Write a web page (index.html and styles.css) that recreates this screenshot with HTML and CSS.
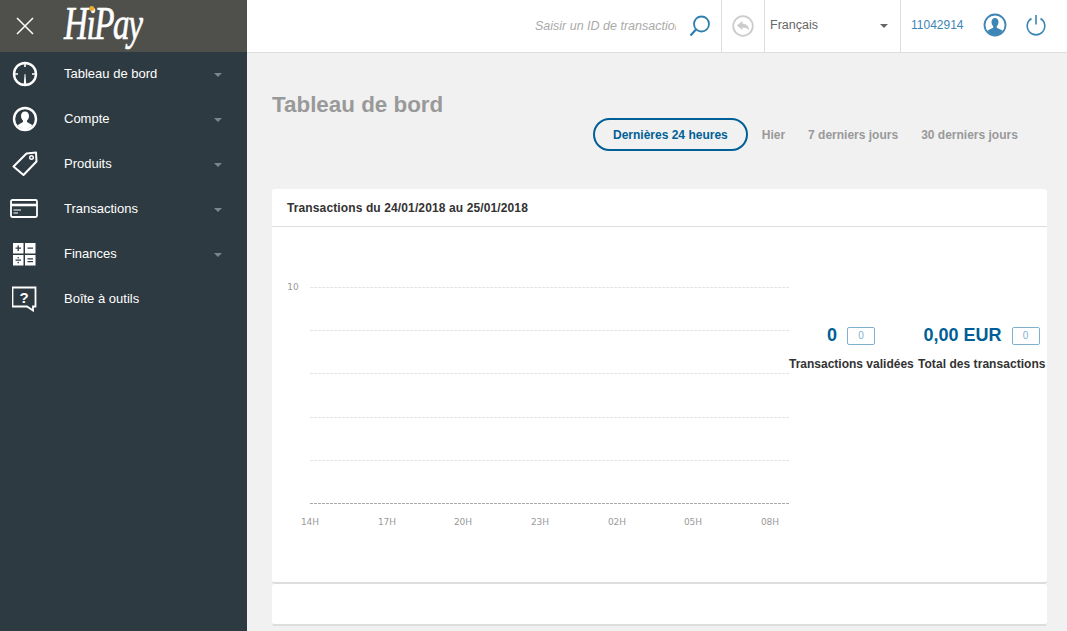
FILE: index.html
```html
<!DOCTYPE html>
<html lang="fr">
<head>
    <meta charset="UTF-8">
    <title>Tableau de bord</title>
    <link rel="stylesheet" href="styles.css">
</head>
<body>

    <aside class="sidebar">
        <div class="brand">
            <svg class="close-icon" width="18" height="18" viewBox="0 0 18 18"><path d="M1 1L17 17M17 1L1 17" stroke="#fff" stroke-width="1.5" fill="none"/></svg>
            <span class="logo">HiPay<i class="logo-dot"></i></span>
        </div>
        <ul class="menu">
            <li class="menu-item">
                <span class="menu-icon">
                    <svg width="28" height="28" viewBox="0 0 28 28"><circle cx="14" cy="14" r="11" stroke="#fff" stroke-width="2.4" fill="none"/><path d="M14 3V7M3 14H7M25 14H21" stroke="#fff" stroke-width="1.6"/><path d="M12.8 24L13.6 14H14.4L15.2 24Z" fill="#fff"/></svg>
                </span>
                <span class="menu-label">Tableau de bord</span>
                <i class="caret"></i>
            </li>
            <li class="menu-item">
                <span class="menu-icon">
                    <svg width="28" height="28" viewBox="0 0 28 28"><circle cx="14" cy="14" r="11" stroke="#fff" stroke-width="2.4" fill="none"/><path d="M14 6.5C11.4 6.5 10 8.6 10 11C10 13 11 14.6 12 15.6V17L6.8 20L8 22L14 25L20 22L21.2 20L16 17V15.6C17 14.6 18 13 18 11C18 8.6 16.6 6.5 14 6.5Z" fill="#fff"/></svg>
                </span>
                <span class="menu-label">Compte</span>
                <i class="caret"></i>
            </li>
            <li class="menu-item">
                <span class="menu-icon">
                    <svg width="28" height="28" viewBox="0 0 28 28"><path d="M2.5 16.5L15.5 3.5L25 2.5L25.5 11.5L12.5 25Z" stroke="#fff" stroke-width="2" stroke-linejoin="round" fill="none"/><circle cx="20.5" cy="7.5" r="1.8" stroke="#fff" stroke-width="1.4" fill="none"/></svg>
                </span>
                <span class="menu-label">Produits</span>
                <i class="caret"></i>
            </li>
            <li class="menu-item">
                <span class="menu-icon">
                    <svg width="30" height="19" viewBox="0 0 30 19"><rect x="1" y="1" width="26" height="17" rx="1.5" stroke="#fff" stroke-width="1.8" fill="none"/><path d="M1 6H27" stroke="#fff" stroke-width="2.6"/><path d="M3.500 11H11M3.500 14H8" stroke="#fff" stroke-width="1"/></svg>
                </span>
                <span class="menu-label">Transactions</span>
                <i class="caret"></i>
            </li>
            <li class="menu-item">
                <span class="menu-icon">
                    <svg width="24" height="24" viewBox="1 0 24 24"><rect x="1" y="1" width="10.500" height="10.500" fill="#fff"/><rect x="13" y="1" width="10.500" height="10.500" fill="#fff"/><rect x="1" y="13" width="10.500" height="10.500" fill="#fff"/><rect x="13" y="13" width="10.500" height="10.500" fill="#fff"/><path d="M3.500 6.200H9M6.200 3.500V9M15.500 6.200H21M3.500 18.200H9M15.500 16.800H21M15.500 19.600H21" stroke="#2e3a41" stroke-width="1.3"/><circle cx="6.200" cy="15.800" r=".8" fill="#2e3a41"/><circle cx="6.200" cy="20.600" r=".8" fill="#2e3a41"/></svg>
                </span>
                <span class="menu-label">Finances</span>
                <i class="caret"></i>
            </li>
            <li class="menu-item">
                <span class="menu-icon">
                    <svg width="26" height="26" viewBox="1 0 26 26"><path d="M1.500 1.500H24.500V20.500H22V24.500L16 20.500H1.500Z" stroke="#fff" stroke-width="1.800" fill="none"/><text x="13" y="16.500" class="help-mark">?</text></svg>
                </span>
                <span class="menu-label">Boîte à outils</span>
            </li>
        </ul>
    </aside>

    <div class="main">
        <header class="topbar">
            <div class="search">
                <input class="search-input" type="text" placeholder="Saisir un ID de transaction">
                <svg width="22" height="22" viewBox="0 0 22 22"><circle cx="12.500" cy="9" r="7.500" stroke="#2e7fb0" stroke-width="1.800" fill="none"/><path d="M7 14.500L1.500 20.500" stroke="#2e7fb0" stroke-width="2.200"/></svg>
            </div>
            <div class="back">
                <svg width="22" height="22" viewBox="0 0 22 22"><circle cx="11" cy="11" r="9.800" stroke="#ccc" stroke-width="1.800" fill="none"/><path d="M4.800 10.500L10.500 6V8.800C14.500 8.800 17 11 17 15.500C15.500 13.300 13.500 12.500 10.500 12.500V15Z" fill="#ccc"/></svg>
            </div>
            <div class="lang">
                <span>Français</span>
                <i class="caret caret-dark"></i>
            </div>
            <div class="account">
                <span class="account-id">11042914</span>
                <svg class="user-icon" width="24" height="24" viewBox="0 0 24 24"><circle cx="12" cy="12" r="10.500" stroke="#3d85b5" stroke-width="1.800" fill="none"/><path d="M12 5C9.800 5 8.500 6.800 8.500 9C8.500 11 9.400 12.400 10.200 13.300V14.800L4.500 17.500C6 20.500 9 22 12 22C15 22 18 20.500 19.500 17.500L13.800 14.800V13.300C14.600 12.400 15.500 11 15.500 9C15.500 6.800 14.200 5 12 5Z" fill="#3d85b5"/></svg>
                <svg class="power-icon" width="20" height="22" viewBox="0 0 20 22"><path d="M5.500 4.500A8.800 8.800 0 1 0 14.500 4.500" stroke="#3d85b5" stroke-width="1.600" fill="none"/><path d="M10 1V10.500" stroke="#3d85b5" stroke-width="1.600"/></svg>
            </div>
        </header>

        <main class="content">
            <h1 class="page-title">Tableau de bord</h1>
            <nav class="periods">
                <a class="period period-active">Dernières 24 heures</a>
                <a class="period">Hier</a>
                <a class="period">7 derniers jours</a>
                <a class="period">30 derniers jours</a>
            </nav>

            <section class="card">
                <h2 class="card-title">Transactions du 24/01/2018 au 25/01/2018</h2>
                <div class="card-body">
                    <svg class="chart" width="517" height="355" viewBox="272 227 517 355">
                        <text class="tick" x="293" y="290" text-anchor="middle">10</text>
                        <path class="grid" d="M310 287.500H789M310 330.500H789M310 373.500H789M310 417.500H789M310 460.500H789"/>
                        <path class="grid grid-base" d="M310 503.500H789"/>
                        <text class="tick" x="310" y="525" text-anchor="middle">14H</text>
                        <text class="tick" x="387" y="525" text-anchor="middle">17H</text>
                        <text class="tick" x="463" y="525" text-anchor="middle">20H</text>
                        <text class="tick" x="540" y="525" text-anchor="middle">23H</text>
                        <text class="tick" x="617" y="525" text-anchor="middle">02H</text>
                        <text class="tick" x="693" y="525" text-anchor="middle">05H</text>
                        <text class="tick" x="770" y="525" text-anchor="middle">08H</text>
                    </svg>
                    <div class="stats">
                        <div class="stat">
                            <div class="stat-value"><strong>0</strong><span class="badge">0</span></div>
                            <div class="stat-label">Transactions validées</div>
                        </div>
                        <div class="stat stat-total">
                            <div class="stat-value"><strong>0,00 EUR</strong><span class="badge">0</span></div>
                            <div class="stat-label">Total des transactions</div>
                        </div>
                    </div>
                </div>
            </section>
            <section class="card card-empty"></section>
        </main>
    </div>

</body>
</html>
```

FILE: styles.css
```css
* { box-sizing: border-box; }
html, body { height: 100%; }
body { margin: 0; display: flex; height: 631px; overflow: hidden; font-family: "Liberation Sans", Arial, sans-serif; background: #f1f1f1; color: #333; }

.sidebar { width: 247px; flex: none; background: #2e3a41; color: #fff; }
.brand { height: 52px; background: #4f504b; display: flex; align-items: center; padding-left: 16px; }
.close-icon { flex: none; }
.logo { position: relative; margin-left: 30px; margin-bottom: 4px; font-family: "Liberation Serif", serif; font-style: italic; font-size: 46px; line-height: 44px; letter-spacing: -2px; -webkit-text-stroke: .7px #fff; color: #fff; display: inline-block; transform: scaleX(.72); transform-origin: left center; }
.logo-dot { position: absolute; left: 35px; top: 4px; width: 7px; height: 5px; border-radius: 50%; background: #e6ae2e; }

.menu { list-style: none; margin: 0; padding: 0; }
.menu-item { height: 45px; display: flex; align-items: center; font-size: 13px; margin-top: -1px; margin-bottom: 1px; }
.menu-icon { width: 64px; flex: none; display: flex; align-items: center; justify-content: center; padding-right: 14px; }
.menu-icon svg { display: block; }
.menu-label { flex: 1; }
.caret { width: 0; height: 0; border-left: 4.500px solid transparent; border-right: 4.500px solid transparent; border-top: 4px solid #7b868c; margin-right: 25.500px; margin-top: 3px; }
.help-mark { font-family: "Liberation Sans", sans-serif; font-size: 15px; font-weight: bold; fill: #fff; text-anchor: middle; }

.main { flex: 1; min-width: 0; }
.topbar { height: 53px; background: #fff; border-bottom: 1px solid #ddd; display: flex; }
.search { width: 475px; display: flex; align-items: center; justify-content: flex-end; border-right: 1px solid #ddd; padding-right: 10px; padding-bottom: 1px; }
.search-input { width: 141px; margin-right: 13px; padding: 0; border: none; outline: none; background: none; font-family: inherit; font-size: 12.500px; font-style: italic; }
.search-input::placeholder { color: #aaa; opacity: 1; }
.back { width: 43px; display: flex; align-items: center; justify-content: center; border-right: 1px solid #ddd; }
.lang { width: 136px; display: flex; align-items: center; justify-content: space-between; padding-left: 5px; padding-bottom: 2px; border-right: 1px solid #ddd; font-size: 12.500px; color: #666; }
.caret-dark { border-top-color: #666; margin-right: 12px; margin-top: 1px; }
.account { flex: 1; display: flex; align-items: center; padding-left: 10px; padding-bottom: 2px; font-size: 12px; color: #3d85b5; }
.account-id { width: 53px; }
.user-icon { margin-left: 19px; }
.power-icon { margin-left: 19px; }

.content { padding: 0 20px 0 25px; }
.page-title { margin: 39px 0 0; font-size: 22.400px; line-height: 26px; font-weight: bold; color: #999; }
.periods { display: flex; align-items: center; margin: 0 0 0 321px; font-size: 12px; font-weight: bold; color: #999; }
.period { padding: 0 11.500px; white-space: nowrap; }
.period-active { height: 33px; line-height: 30px; padding: 0 18px; border: 2px solid #005f96; border-radius: 17px; color: #005f96; margin-right: 2.500px; }

.card { background: #fff; border-bottom: 2px solid #ddd; border-radius: 3px; }
.periods + .card { margin-top: 38px; }
.card-title { height: 38px; margin: 0; padding-left: 15px; border-bottom: 1px solid #ddd; font-size: 12px; line-height: 38px; font-weight: bold; letter-spacing: .12px; color: #333; }
.card-body { display: flex; height: 355px; }
.chart { display: block; flex: none; }
.grid { stroke: #e4e4e4; stroke-dasharray: 3 1; fill: none; }
.grid-base { stroke: #aaa; }
.tick { font-family: "DejaVu Sans", sans-serif; font-size: 9px; fill: #999; }

.stats { display: flex; gap: 5px; padding-top: 100px; }
.stat { width: 124px; white-space: nowrap; text-align: center; }
.stat-total { width: 127px; }
.stat-value { height: 18px; display: flex; align-items: center; justify-content: center; gap: 10px; }
.stat-value strong { font-size: 18px; color: #005f96; margin-top: -2px; }
.badge { width: 28px; height: 18px; border: 1px solid #7fb0cf; border-radius: 2px; font-size: 10px; line-height: 16px; color: #7fb0cf; }
.stat-label { margin-top: 12px; font-size: 12px; line-height: 14px; font-weight: bold; }
.stat-total .stat-label { letter-spacing: .05px; }
.card-empty { height: 42px; }
```
